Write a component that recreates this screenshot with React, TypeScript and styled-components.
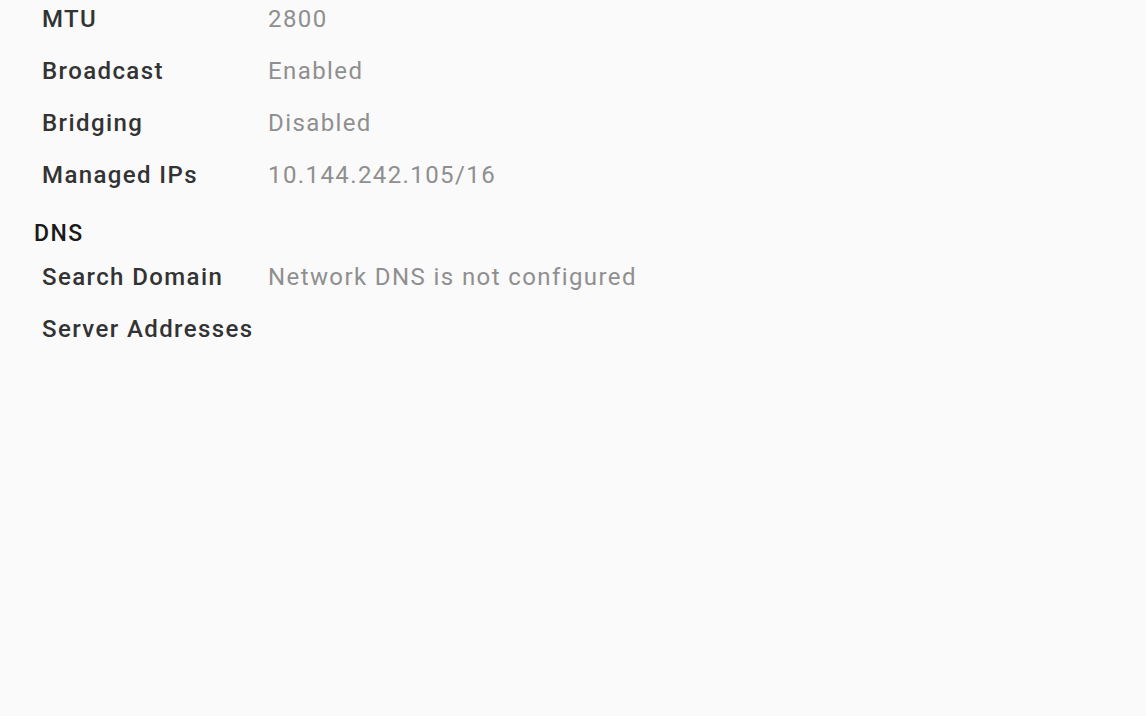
import React from "react";
import styled, { createGlobalStyle } from "styled-components";

const Global = createGlobalStyle`
  html, body { margin: 0; padding: 0; background: #fafafa; }
  body { font-family: Roboto, "Noto Sans", "Liberation Sans", sans-serif; overflow: hidden; }
`;

const Page = styled.div`
  width: 1146px;
  height: 716px;
  background: #fafafa;
  overflow: hidden;
`;

const Content = styled.div`
  margin-top: -7px;
  padding-left: 34px;
  display: flex;
  flex-direction: column;
`;

const Row = styled.div`
  display: grid;
  grid-template-columns: 226px 1fr;
  align-items: center;
  height: 52px;
  padding-left: 8px;
`;

const Label = styled.span`
  font-size: 24px;
  font-weight: 500;
  color: #333333;
  letter-spacing: 1.4px;
  white-space: nowrap;
`;

const Value = styled.span`
  font-size: 24px;
  font-weight: 400;
  color: #8f8f8f;
  letter-spacing: 1.4px;
  white-space: nowrap;
`;

const SectionTitle = styled.div`
  padding-top: 16px;
  line-height: 34px;
  height: 34px;
  font-size: 23px;
  font-weight: 500;
  color: #1a1a1a;
  letter-spacing: 1.4px;
`;

const ifaceRows: [string, string][] = [
  ["MTU", "2800"],
  ["Broadcast", "Enabled"],
  ["Bridging", "Disabled"],
  ["Managed IPs", "10.144.242.105/16"],
];

const dnsRows: [string, string][] = [
  ["Search Domain", "Network DNS is not configured"],
  ["Server Addresses", ""],
];

export default function App() {
  return (
    <Page>
      <Global />
      <Content>
        {ifaceRows.map(([l, v]) => (
          <Row key={l}>
            <Label>{l}</Label>
            <Value>{v}</Value>
          </Row>
        ))}
        <SectionTitle>DNS</SectionTitle>
        {dnsRows.map(([l, v]) => (
          <Row key={l}>
            <Label>{l}</Label>
            <Value>{v}</Value>
          </Row>
        ))}
      </Content>
    </Page>
  );
}
